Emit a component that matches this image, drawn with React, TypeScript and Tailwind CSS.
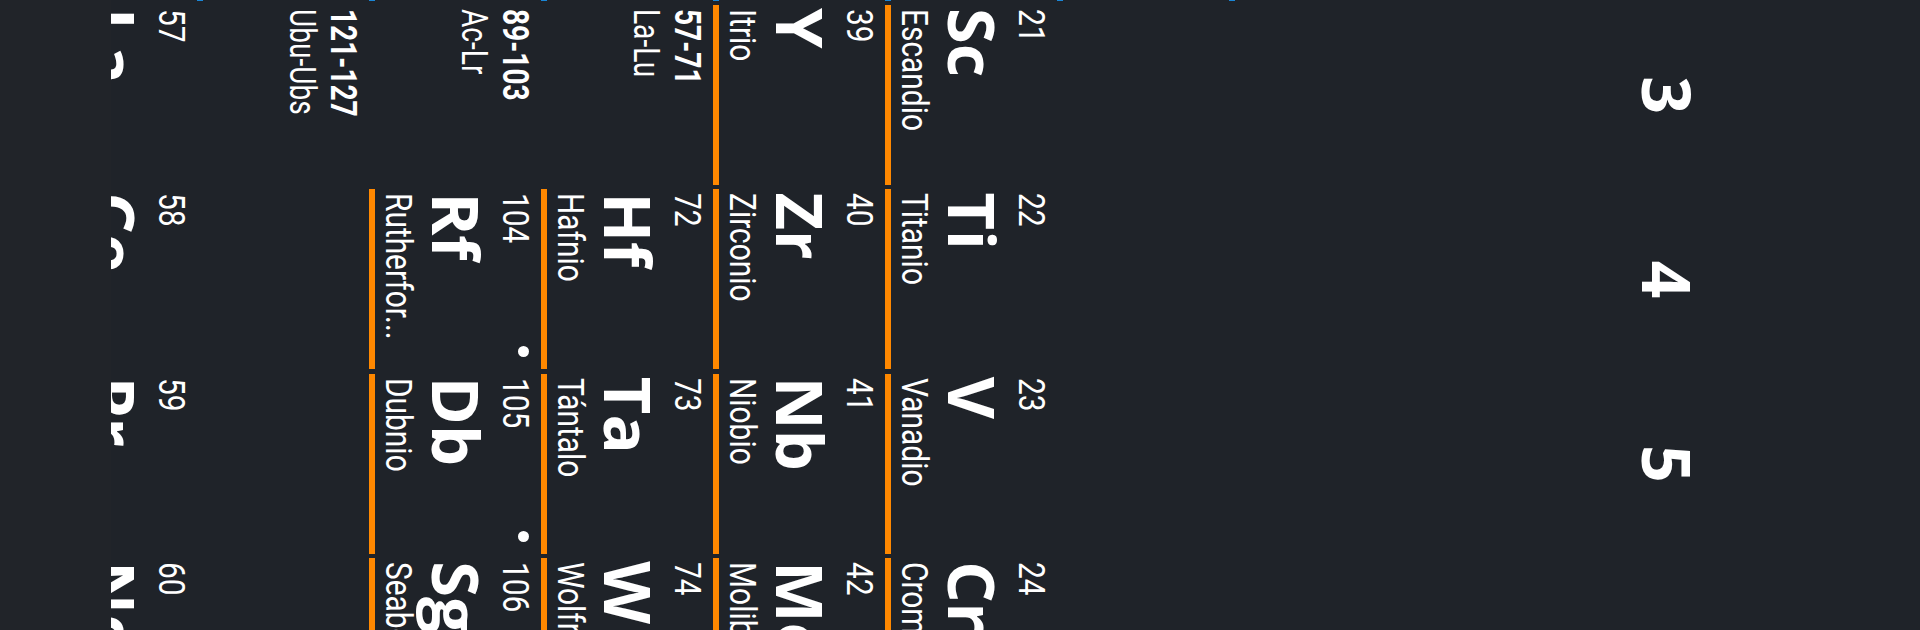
import React from 'react'

type El = { t: 'el'; n: number; s: string; name: string; c: string; dot?: boolean }
type Range = { t: 'range'; r: string; label: string }
type Cell = El | Range | null

const blue = 'bg-[#1a86d6]'
const orange = 'bg-[#ff8800]'
const pink = 'bg-[#e0457b]'

const el = (n: number, s: string, name: string, c: string, dot = false): El => ({ t: 'el', n, s, name, c, dot })
const range = (r: string, label: string): Range => ({ t: 'range', r, label })

// columns: group 2 (scrolled off to the left), 3, 4, 5, 6
const groups = ['2', '3', '4', '5', '6']

const rows: Cell[][] = [
  [el(4, 'Be', 'Berilio', blue), null, null, null, null],
  [el(12, 'Mg', 'Magnesio', blue), null, null, null, null],
  [el(20, 'Ca', 'Calcio', blue), el(21, 'Sc', 'Escandio', orange), el(22, 'Ti', 'Titanio', orange), el(23, 'V', 'Vanadio', orange), el(24, 'Cr', 'Cromo', orange)],
  [el(38, 'Sr', 'Estroncio', blue), el(39, 'Y', 'Itrio', orange), el(40, 'Zr', 'Zirconio', orange), el(41, 'Nb', 'Niobio', orange), el(42, 'Mo', 'Molibdeno', orange)],
  [el(56, 'Ba', 'Bario', blue), range('57-71', 'La-Lu'), el(72, 'Hf', 'Hafnio', orange), el(73, 'Ta', 'Tántalo', orange), el(74, 'W', 'Wolframio', orange)],
  [el(88, 'Ra', 'Radio', blue), range('89-103', 'Ac-Lr'), el(104, 'Rf', 'Rutherfor...', orange, true), el(105, 'Db', 'Dubnio', orange, true), el(106, 'Sg', 'Seaborgio', orange, true)],
  [el(120, 'Ubn', 'Unbinilio', blue), range('121-127', 'Ubu-Ubs'), null, null, null],
  [null, el(57, 'La', 'Lantano', pink), el(58, 'Ce', 'Cerio', pink), el(59, 'Pr', 'Praseodimio', pink), el(60, 'Nd', 'Neodimio', pink)],
]

// narrow text, like the app's condensed face
function Cond({ children }: { children: React.ReactNode }) {
  return <span className="inline-block origin-left scale-x-[0.83] whitespace-nowrap">{children}</span>
}

function Narrow({ children }: { children: React.ReactNode }) {
  return <span className="inline-block origin-left scale-x-[0.78] whitespace-nowrap">{children}</span>
}

function ElementCell({ cell }: { cell: Cell }) {
  if (!cell) return <div className="h-[172px]" />

  if (cell.t === 'range') {
    return (
      <div className="h-[172px] flex flex-col pl-[4px] text-white">
        <div className="mt-[8px] h-[36px] text-[36px] leading-[36px] font-bold">
          <Narrow>{cell.r}</Narrow>
        </div>
        <div className="mt-[5px] h-[36px] text-[36px] leading-[36px]">
          <Narrow>{cell.label}</Narrow>
        </div>
      </div>
    )
  }

  return (
    <div className="h-[172px] flex flex-col text-white">
      <div className="mt-[8px] h-[36px] flex justify-between items-start pl-[4px] pr-[12px]">
        <span className="text-[36px] leading-[36px]">
          <Cond>{cell.n}</Cond>
        </span>
        {cell.dot && <span className="mt-[4px] w-[11px] h-[11px] rounded-full bg-white" />}
      </div>
      <div className="mt-[8px] h-[65px] pl-[3px] text-[65px] leading-[65px] font-bold font-['Open_Sans',sans-serif] whitespace-nowrap">
        {cell.s}
      </div>
      <div className="mt-[8px] h-[36px] pl-[4px] text-[36px] leading-[36px] overflow-hidden">
        <Cond>{cell.name}</Cond>
      </div>
      <div className={`mt-auto h-[6px] ${cell.c}`} />
    </div>
  )
}

export default function App() {
  return (
    <div className="w-[1920px] h-[630px] overflow-hidden bg-[#1f2329] font-['Roboto',sans-serif]">
      {/* phone screen in portrait, turned a quarter clockwise */}
      <div className="w-[630px] h-[1920px] origin-top-left translate-x-[1920px] rotate-90 flex flex-col bg-[#1f2329]">
        <div className="h-[1809px] overflow-hidden pt-[218.5px]">
          <div className="ml-[-179.4px]">
            {/* group numbers */}
            <div className="grid grid-cols-[repeat(5,180px)] gap-x-[4.4px]">
              {groups.map((g) => (
                <div
                  key={g}
                  className="h-[66px] text-center text-white text-[66px] leading-[66px] font-bold font-['Open_Sans',sans-serif]"
                >
                  {g}
                </div>
              ))}
            </div>

            {/* table */}
            <div className="mt-[234.5px] grid grid-cols-[repeat(5,180px)] gap-x-[4.4px]">
              {rows.map((row, i) =>
                row.map((cell, j) => <ElementCell key={`${i}-${j}`} cell={cell} />)
              )}
            </div>
          </div>
        </div>

        {/* bottom strip */}
        <div className="h-[111px] bg-[#212429]" />
      </div>
    </div>
  )
}
